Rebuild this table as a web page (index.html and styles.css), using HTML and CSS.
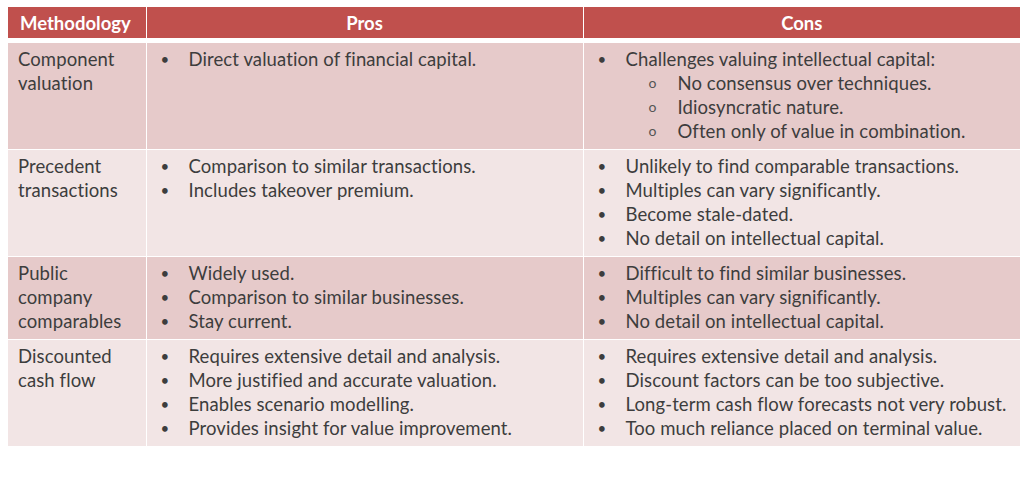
FILE: index.html
```html
<!DOCTYPE html>
<html>
<head>
<meta charset="utf-8">
<link rel="stylesheet" href="styles.css">
</head>
<body>
<table class="grid">
  <colgroup>
    <col class="c-method">
    <col class="c-pros">
    <col class="c-cons">
  </colgroup>
  <thead>
    <tr>
      <th class="h-left">Methodology</th>
      <th>Pros</th>
      <th>Cons</th>
    </tr>
  </thead>
  <tbody>
    <tr class="band">
      <td class="method">Component<br>valuation</td>
      <td><ul class="list"><li>Direct valuation of financial capital.</li></ul></td>
      <td>
        <ul class="list">
          <li>Challenges valuing intellectual capital:</li>
        </ul>
        <ul class="list sub">
          <li>No consensus over techniques.</li>
          <li>Idiosyncratic nature.</li>
          <li>Often only of value in combination.</li>
        </ul>
      </td>
    </tr>
    <tr class="plain">
      <td class="method">Precedent<br>transactions</td>
      <td><ul class="list"><li>Comparison to similar transactions.</li><li>Includes takeover premium.</li></ul></td>
      <td><ul class="list"><li>Unlikely to find comparable transactions.</li><li>Multiples can vary significantly.</li><li>Become stale-dated.</li><li>No detail on intellectual capital.</li></ul></td>
    </tr>
    <tr class="band">
      <td class="method">Public<br>company<br>comparables</td>
      <td><ul class="list"><li>Widely used.</li><li>Comparison to similar businesses.</li><li>Stay current.</li></ul></td>
      <td><ul class="list"><li>Difficult to find similar businesses.</li><li>Multiples can vary significantly.</li><li>No detail on intellectual capital.</li></ul></td>
    </tr>
    <tr class="plain">
      <td class="method">Discounted<br>cash flow</td>
      <td><ul class="list"><li>Requires extensive detail and analysis.</li><li>More justified and accurate valuation.</li><li>Enables scenario modelling.</li><li>Provides insight for value improvement.</li></ul></td>
      <td><ul class="list"><li>Requires extensive detail and analysis.</li><li>Discount factors can be too subjective.</li><li>Long-term cash flow forecasts not very robust.</li><li>Too much reliance placed on terminal value.</li></ul></td>
    </tr>
  </tbody>
</table>
</body>
</html>
```
FILE: styles.css
```css
html, body {
  margin: 0;
  padding: 0;
  background: #ffffff;
}
body {
  padding: 7px 0 0 8px;
  font-family: Lato, "Liberation Sans", sans-serif;
  color: #3d3d3d;
}
.grid {
  border-collapse: collapse;
  table-layout: fixed;
  width: 1012px;
}
.c-method { width: 138px; }
.c-pros { width: 437px; }
.c-cons { width: 437px; }

.grid th {
  background: #c0504d;
  color: #ffffff;
  font-weight: 700;
  font-size: 18.5px;
  height: 31px;
  padding: 0;
  text-align: center;
  border-left: 1.5px solid #ffffff;
  border-bottom: 5px solid #ffffff;
}
.grid th:first-child { border-left: none; }
.grid th.h-left {
  text-align: left;
  padding-left: 12px;
}
.grid td {
  vertical-align: top;
  padding: 4px 0 6px 12px;
  font-size: 18.5px;
  letter-spacing: 0.1px;
  line-height: 24px;
  border-left: 1.5px solid #ffffff;
  border-top: 1px solid #ffffff;
}
.grid td:first-child { border-left: none; }
.grid td.method { padding-left: 10px; }
.grid tbody tr:first-child td { border-top: none; }
.band td { background: #e6caca; }
.plain td { background: #f2e5e5; }

.list {
  list-style: none;
  margin: 0;
  padding: 0;
}
.list li {
  display: flex;
}
.list li::before {
  content: "\2022";
  flex: 0 0 30px;
  font-size: 15px;
  padding-left: 2px;
  box-sizing: border-box;
}
.list.sub { padding-left: 53px; }
.list.sub li::before {
  content: "o";
  font-size: 14px;
  flex: 0 0 29px;
  padding-left: 0;
  color: #555555;
}
```
